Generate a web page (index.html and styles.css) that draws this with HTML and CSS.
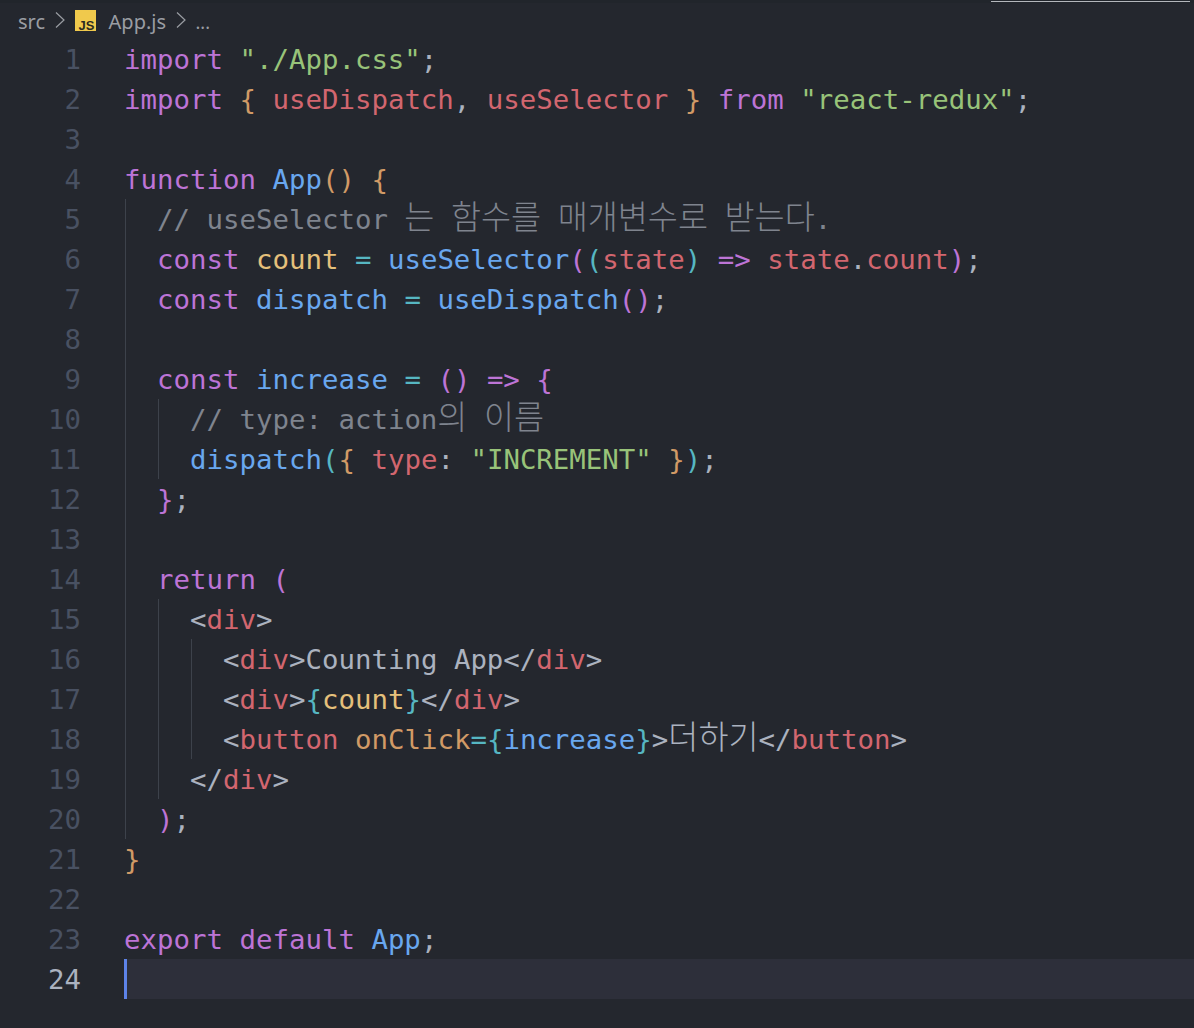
FILE: index.html
```html
<!DOCTYPE html>
<html lang="ko">
<head>
<meta charset="utf-8">
<title>App.js</title>
<link rel="stylesheet" href="styles.css">
</head>
<body>
<div class="topstrip"><div class="topline"></div></div>
<nav class="crumbs">
  <span>src</span>
  <svg class="chev" viewBox="0 0 10 16"><path d="M1 .5L9 8l-8 7.500" /></svg>
  <svg class="jsicon" viewBox="0 0 21 21"><rect width="21" height="21" fill="#f0c94c"/><text x="19.500" y="19.500" class="jstext">JS</text></svg>
  <span class="file">App.js</span>
  <svg class="chev" viewBox="0 0 10 16"><path d="M1 .5L9 8l-8 7.500" /></svg>
  <span class="dots">...</span>
</nav>
<main class="editor">
  <div class="row"><span class="num">1</span><span class="code"><span class="k">import</span> <span class="s">"./App.css"</span><span class="p">;</span></span></div>
  <div class="row"><span class="num">2</span><span class="code"><span class="k">import</span> <span class="o">{</span> <span class="r">useDispatch</span><span class="p">,</span> <span class="r">useSelector</span> <span class="o">}</span> <span class="k">from</span> <span class="s">"react-redux"</span><span class="p">;</span></span></div>
  <div class="row"><span class="num">3</span><span class="code"></span></div>
  <div class="row"><span class="num">4</span><span class="code"><span class="k">function</span> <span class="f">App</span><span class="o">()</span> <span class="o">{</span></span></div>
  <div class="row"><span class="num">5</span><span class="ind"></span><span class="code"><span class="c">// useSelector <span class="ko">는</span> <span class="ko">함수를</span> <span class="ko">매개변수로</span> <span class="ko">받는다</span>.</span></span></div>
  <div class="row"><span class="num">6</span><span class="ind"></span><span class="code"><span class="k">const</span> <span class="y">count</span> <span class="t">=</span> <span class="f">useSelector</span><span class="v">(</span><span class="b">(</span><span class="r">state</span><span class="b">)</span> <span class="k">=&gt;</span> <span class="r">state</span><span class="p">.</span><span class="r">count</span><span class="v">)</span><span class="p">;</span></span></div>
  <div class="row"><span class="num">7</span><span class="ind"></span><span class="code"><span class="k">const</span> <span class="f">dispatch</span> <span class="t">=</span> <span class="f">useDispatch</span><span class="v">()</span><span class="p">;</span></span></div>
  <div class="row"><span class="num">8</span><span class="ind"></span><span class="code"></span></div>
  <div class="row"><span class="num">9</span><span class="ind"></span><span class="code"><span class="k">const</span> <span class="f">increase</span> <span class="t">=</span> <span class="v">()</span> <span class="k">=&gt;</span> <span class="v">{</span></span></div>
  <div class="row"><span class="num">10</span><span class="ind"></span><span class="ind"></span><span class="code"><span class="c">// type: action<span class="ko">의</span> <span class="ko">이름</span></span></span></div>
  <div class="row"><span class="num">11</span><span class="ind"></span><span class="ind"></span><span class="code"><span class="f">dispatch</span><span class="b">(</span><span class="o">{</span> <span class="r">type</span><span class="p">:</span> <span class="s">"INCREMENT"</span> <span class="o">}</span><span class="b">)</span><span class="p">;</span></span></div>
  <div class="row"><span class="num">12</span><span class="ind"></span><span class="code"><span class="v">}</span><span class="p">;</span></span></div>
  <div class="row"><span class="num">13</span><span class="ind"></span><span class="code"></span></div>
  <div class="row"><span class="num">14</span><span class="ind"></span><span class="code"><span class="k">return</span> <span class="v">(</span></span></div>
  <div class="row"><span class="num">15</span><span class="ind"></span><span class="ind"></span><span class="code"><span class="p">&lt;</span><span class="r">div</span><span class="p">&gt;</span></span></div>
  <div class="row"><span class="num">16</span><span class="ind"></span><span class="ind"></span><span class="ind"></span><span class="code"><span class="p">&lt;</span><span class="r">div</span><span class="p">&gt;Counting App&lt;/</span><span class="r">div</span><span class="p">&gt;</span></span></div>
  <div class="row"><span class="num">17</span><span class="ind"></span><span class="ind"></span><span class="ind"></span><span class="code"><span class="p">&lt;</span><span class="r">div</span><span class="p">&gt;</span><span class="b">{</span><span class="y">count</span><span class="b">}</span><span class="p">&lt;/</span><span class="r">div</span><span class="p">&gt;</span></span></div>
  <div class="row"><span class="num">18</span><span class="ind"></span><span class="ind"></span><span class="ind"></span><span class="code"><span class="p">&lt;</span><span class="r">button</span> <span class="a">onClick</span><span class="t">=</span><span class="b">{</span><span class="f">increase</span><span class="b">}</span><span class="p">&gt;<span class="ko">더하기</span>&lt;/</span><span class="r">button</span><span class="p">&gt;</span></span></div>
  <div class="row"><span class="num">19</span><span class="ind"></span><span class="ind"></span><span class="code"><span class="p">&lt;/</span><span class="r">div</span><span class="p">&gt;</span></span></div>
  <div class="row"><span class="num">20</span><span class="ind"></span><span class="code"><span class="v">)</span><span class="p">;</span></span></div>
  <div class="row"><span class="num">21</span><span class="code"><span class="o">}</span></span></div>
  <div class="row"><span class="num">22</span><span class="code"></span></div>
  <div class="row"><span class="num">23</span><span class="code"><span class="k">export</span> <span class="k">default</span> <span class="f">App</span><span class="p">;</span></span></div>
  <div class="row current"><span class="num">24</span><span class="code cursor"></span></div>
</main>
</body>
</html>
```
FILE: styles.css
```css
* { box-sizing: border-box; }
html, body { margin: 0; height: 100%; }
body {
  width: 1194px;
  height: 1028px;
  overflow: hidden;
  background: #24272e;
  font-family: "DejaVu Sans Mono", "Noto Sans CJK KR", monospace;
}
.topstrip {
  height: 3px;
  background: #21252b;
  display: flex;
  justify-content: flex-end;
  padding: 1px 4px 0 0;
}
.topline { width: 199px; height: 1px; background: #b4b7bc; }
.crumbs {
  height: 36px;
  padding: 1px 0 0 18px;
  display: flex;
  align-items: center;
  font-family: "Noto Sans", "Open Sans", sans-serif;
  font-size: 20px;
  color: #9a9da3;
}
.chev { width: 10px; height: 16px; margin: 0 10px 3px 9.500px; fill: none; stroke: #9a9da3; stroke-width: 1.200; }
.jsicon { width: 21px; height: 21px; margin: 0 13px 2px 0; }
.jstext { font-family: "Liberation Sans", sans-serif; font-size: 13px; font-weight: 700; fill: #2a2a22; text-anchor: end; }
.dots { font-size: 18px; }
.editor { display: flex; flex-direction: column; }
.row {
  display: flex;
  height: 40px;
  font-size: 27.400px;
  line-height: 42px;
  color: #abb2bf;
  white-space: pre;
}
.num { width: 124px; padding-right: 43px; text-align: right; color: #495162; flex: none; }
.current .num { color: #abb2bf; }
.ind {
  width: 33px;
  flex: none;
  background: linear-gradient(#3d424b, #3d424b) 1px 0 / 1px 100% no-repeat;
}
.code { flex: 1; }
.current .code { background: #2d2f3a; }
.cursor { border-left: 3px solid #5d83e8; }
.ko { font-family: "Noto Sans CJK KR", sans-serif; font-size: 32.700px; font-weight: 300; line-height: 0; }
.k { color: #bd74d6; }
.s { color: #98c379; }
.p { color: #abb2bf; }
.o { color: #d19a66; }
.r { color: #d2666f; }
.f { color: #69a7ef; }
.c { color: #7f848e; }
.y { color: #e5c07b; }
.t { color: #56b6c2; }
.v { color: #bd74d6; }
.b { color: #56b6c2; }
.a { color: #d19a66; }
```
